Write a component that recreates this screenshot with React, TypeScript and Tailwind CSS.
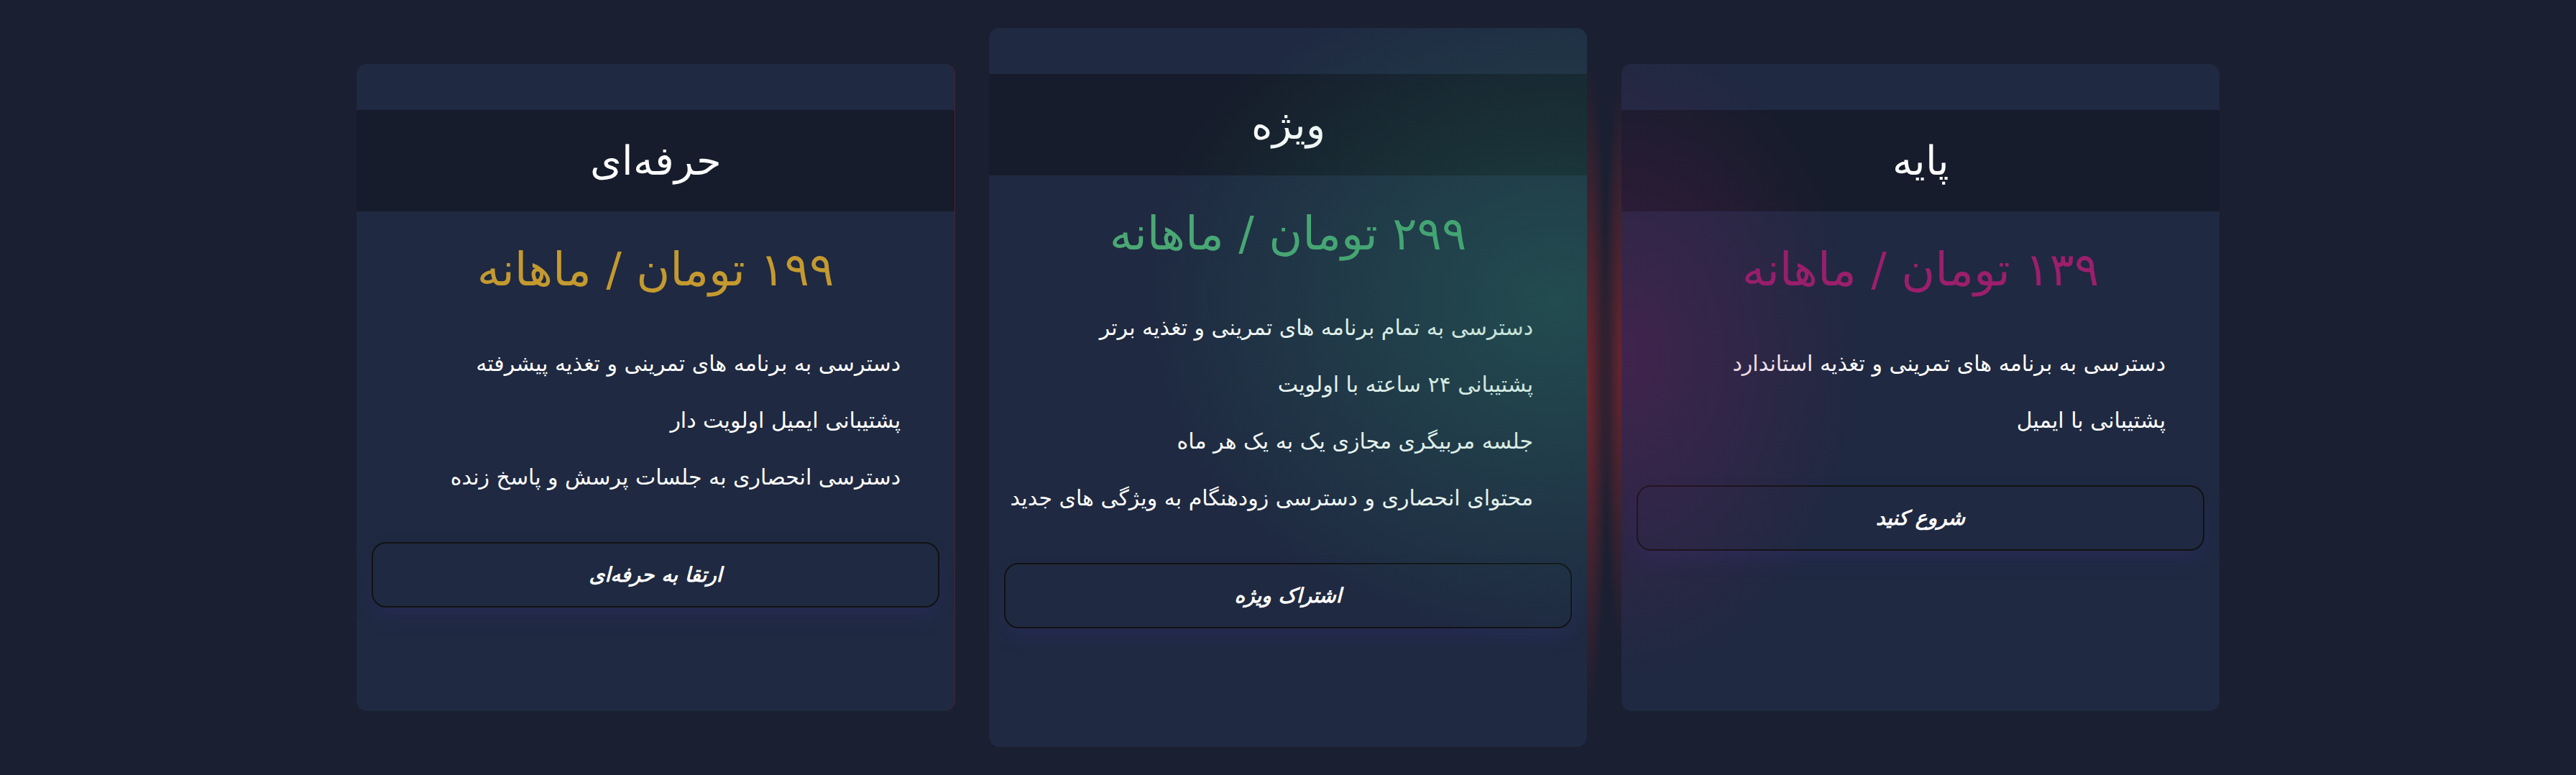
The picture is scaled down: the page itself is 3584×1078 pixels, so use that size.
import React from "react";

type Plan = {
  title: string;
  price: string;
  priceClass: string;
  features: string[];
  button: string;
  heightClass: string;
  glow: "left" | "right" | "line";
  overlayClass: string;
};

const plans: Plan[] = [
  {
    title: "پایه",
    price: "۱۳۹ تومان / ماهانه",
    priceClass: "text-[#9b1f6c]",
    features: ["دسترسی به برنامه های تمرینی و تغذیه استاندارد", "پشتیبانی با ایمیل"],
    button: "شروع کنید",
    heightClass: "h-[900px]",
    glow: "left",
    overlayClass:
      "bg-[radial-gradient(ellipse_40%_50%_at_0%_45%,rgba(130,25,100,0.34),rgba(130,25,100,0)_100%)]",
  },
  {
    title: "ویژه",
    price: "۲۹۹ تومان / ماهانه",
    priceClass: "text-[#4aa874]",
    features: [
      "دسترسی به تمام برنامه های تمرینی و تغذیه برتر",
      "پشتیبانی ۲۴ ساعته با اولویت",
      "جلسه مربیگری مجازی یک به یک هر ماه",
      "محتوای انحصاری و دسترسی زودهنگام به ویژگی های جدید",
    ],
    button: "اشتراک ویژه",
    heightClass: "h-[1000px]",
    glow: "right",
    overlayClass:
      "bg-[radial-gradient(ellipse_70%_48%_at_95%_38%,rgba(40,150,110,0.32),rgba(40,150,110,0)_100%)]",
  },
  {
    title: "حرفه\u200Cای",
    price: "۱۹۹ تومان / ماهانه",
    priceClass: "text-[#c49a2f]",
    features: [
      "دسترسی به برنامه های تمرینی و تغذیه پیشرفته",
      "پشتیبانی ایمیل اولویت دار",
      "دسترسی انحصاری به جلسات پرسش و پاسخ زنده",
    ],
    button: "ارتقا به حرفه\u200Cای",
    heightClass: "h-[900px]",
    glow: "line",
    overlayClass: "",
  },
];

function Card({ plan }: { plan: Plan }) {
  return (
    <div className={`relative w-[832px] ${plan.heightClass} shrink-0`}>
      {plan.glow === "right" && (
        <div className="pointer-events-none absolute left-full top-0 h-full w-[40px] bg-[radial-gradient(30px_46%_at_0%_50%,rgba(170,42,42,0.6),rgba(170,42,42,0))]" />
      )}
      {plan.glow === "left" && (
        <div className="pointer-events-none absolute right-full top-0 h-full w-[40px] bg-[radial-gradient(26px_44%_at_100%_46%,rgba(170,42,42,0.55),rgba(170,42,42,0))]" />
      )}
      <div
        className={`relative h-full w-full overflow-hidden rounded-[14px] bg-[#1f2941] pt-[64px] ${
          plan.glow === "line" ? "shadow-[1px_0_0_0_rgba(120,35,45,0.55)]" : ""
        }`}
      >
        <div className="flex h-[141px] items-center justify-center bg-[#161c2b]">
          <h2 className="text-[56px] font-light leading-none text-white">{plan.title}</h2>
        </div>
        <div className={`mt-[49px] text-center text-[64px] leading-[64px] ${plan.priceClass}`}>
          {plan.price}
        </div>
        <ul className="mt-[79px] flex flex-col gap-[39px] pr-[75px] pl-[24px]">
          {plan.features.map((f) => (
            <li key={f} className="text-[30px] leading-[40px] text-white">
              {f}
            </li>
          ))}
        </ul>
        <div className="mx-[21px] mt-[70px]">
          <button className="flex h-[91px] w-full items-center justify-center rounded-[20px] border-2 border-[#121212] bg-[#1f2941] text-[28px] font-bold italic text-white shadow-[0_14px_26px_rgba(60,50,150,0.18)]">
            {plan.button}
          </button>
        </div>
        {plan.overlayClass && (
          <div className={`pointer-events-none absolute inset-0 ${plan.overlayClass}`} />
        )}
      </div>
    </div>
  );
}

export default function App() {
  return (
    <div
      dir="rtl"
      className="flex h-[1078px] w-full items-center justify-center gap-12 bg-[#1a1f31] font-['DejaVu_Sans',sans-serif]"
    >
      {plans.map((p) => (
        <Card key={p.title} plan={p} />
      ))}
    </div>
  );
}
